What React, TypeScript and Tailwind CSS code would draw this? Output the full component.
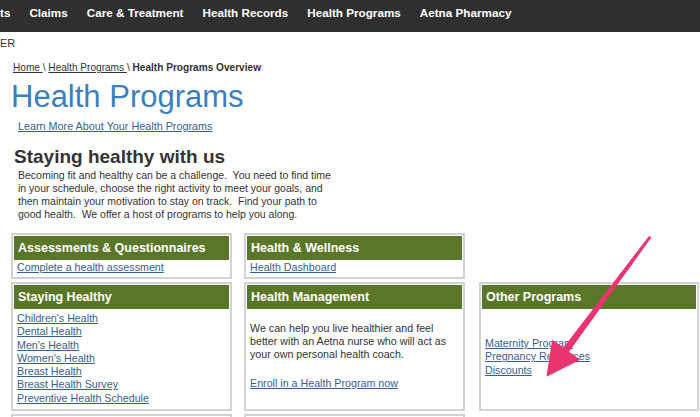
import * as React from 'react'

// Portal page: top nav, intro, three columns of program boxes and an annotation arrow

const NAV = ['ts', 'Claims', 'Care & Treatment', 'Health Records', 'Health Programs', 'Aetna Pharmacy']

const STAYING = [
  "Children's Health",
  'Dental Health',
  "Men's Health",
  "Women's Health",
  'Breast Health',
  'Breast Health Survey',
  'Preventive Health Schedule',
]

function Link({ children }: { children: React.ReactNode }) {
  return <a className="block text-[#35608f] underline decoration-[#35608f] leading-[13.3px] cursor-pointer">{children}</a>
}

function Box({ title, children, className = '' }: { title: string; children?: React.ReactNode; className?: string }) {
  return (
    <div className={`border-2 border-[#d2d2d2] p-[1px] ${className}`}>
      <div className="h-[24px] bg-[#5a7628] text-white font-bold text-[12.5px] leading-[24px] pl-[4px] whitespace-nowrap">
        {title}
      </div>
      <div className="px-[3px] text-[10.7px]">{children}</div>
    </div>
  )
}

function Arrow() {
  return (
    <svg className="absolute left-0 top-0 pointer-events-none" width="700" height="417" viewBox="0 0 700 417">
      <polygon
        points="650.8,237.6 568.4,351.9 579.5,359.6 547,376 552.6,340.6 563.6,348.1 649.2,236.4"
        fill="#ea3470"
        stroke="#ea3470"
        strokeWidth="1"
        strokeLinejoin="round"
      />
    </svg>
  )
}

export default function App() {
  return (
    <div className="relative w-[700px] h-[417px] overflow-hidden bg-white text-[#333] font-['Liberation_Sans',Arial,sans-serif]">
      {/* top nav */}
      <nav className="h-[32px] bg-[#2f2f2f] flex gap-[19px] text-white font-bold text-[11.7px] leading-[26px] whitespace-nowrap">
        {NAV.map((item) => (
          <span key={item}>{item}</span>
        ))}
      </nav>

      <div className="text-[11px] leading-[13px] mt-[5px]">ER</div>

      <div className="ml-[13px] mt-[11px] text-[10.1px] leading-[13px]">
        <a className="underline">Home </a> \ <a className="underline">Health Programs </a> \{' '}
        <span className="font-bold">Health Programs Overview</span>
      </div>

      <h1 className="ml-[11px] mt-[5px] text-[31px] leading-[36px] text-[#3a80c0]">Health Programs</h1>

      <a className="block ml-[18px] mt-[5px] text-[10.8px] leading-[13px] text-[#35608f] underline">
        Learn More About Your Health Programs
      </a>

      <h2 className="ml-[14px] mt-[13px] text-[19px] leading-[22px] font-bold">Staying healthy with us</h2>

      <p className="ml-[18px] mt-[1px] w-[322px] text-[10.5px] leading-[13px]">
        Becoming fit and healthy can be a challenge.&nbsp; You need to find time in your schedule, choose the right
        activity to meet your goals, and then maintain your motivation to stay on track.&nbsp; Find your path to good
        health.&nbsp; We offer a host of programs to help you along.
      </p>

      {/* program boxes */}
      <div className="flex ml-[11px] mt-[12px]">
        <div className="w-[221px] flex flex-col gap-[3px]">
          <Box title="Assessments & Questionnaires" className="h-[46px]">
            <div className="pt-[1px]">
              <Link>Complete a health assessment</Link>
            </div>
          </Box>
          <Box title="Staying Healthy" className="h-[129px]">
            <div className="pt-[3px]">
              {STAYING.map((s) => (
                <Link key={s}>{s}</Link>
              ))}
            </div>
          </Box>
          <Box title="" />
        </div>

        <div className="w-[221px] ml-[12px] flex flex-col gap-[3px]">
          <Box title="Health & Wellness" className="h-[46px]">
            <div className="pt-[1px]">
              <Link>Health Dashboard</Link>
            </div>
          </Box>
          <Box title="Health Management" className="h-[129px]">
            <p className="pt-[13px] leading-[13px] pr-[4px]">
              We can help you live healthier and feel better with an Aetna nurse who will act as your own personal
              health coach.
            </p>
            <div className="mt-[16px]">
              <Link>Enroll in a Health Program now</Link>
            </div>
          </Box>
          <Box title="" />
        </div>

        <div className="w-[220px] ml-[14px] flex flex-col">
          <div className="h-[49px]" />
          <Box title="Other Programs" className="h-[129px]">
            <div className="pt-[28px]">
              <Link>Maternity Program</Link>
              <Link>Pregnancy Resources</Link>
              <Link>Discounts</Link>
            </div>
          </Box>
        </div>
      </div>

      <Arrow />
    </div>
  )
}
